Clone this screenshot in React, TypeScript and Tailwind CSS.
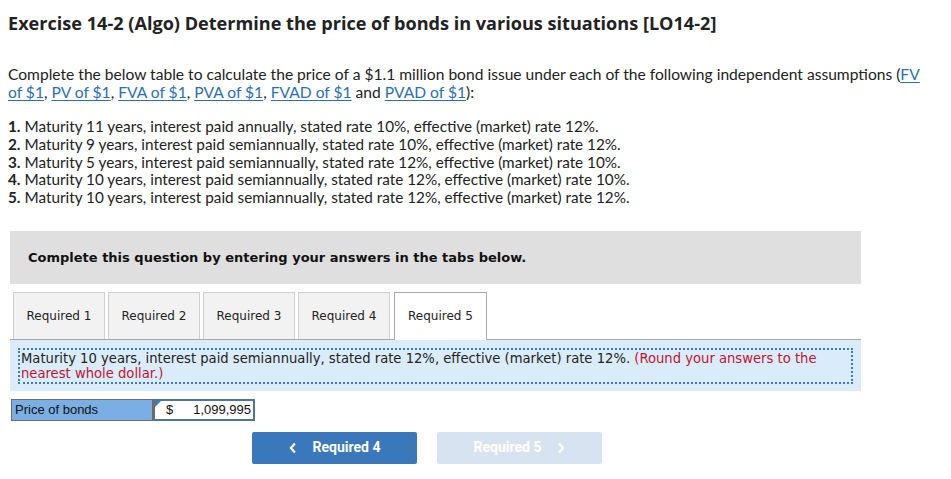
import React from "react";

const link = "text-[#2a6ebb] underline decoration-1 underline-offset-[1.5px]";

export default function App() {
  const items = [
    ["1.", "Maturity 11 years, interest paid annually, stated rate 10%, effective (market) rate 12%."],
    ["2.", "Maturity 9 years, interest paid semiannually, stated rate 10%, effective (market) rate 12%."],
    ["3.", "Maturity 5 years, interest paid semiannually, stated rate 12%, effective (market) rate 10%."],
    ["4.", "Maturity 10 years, interest paid semiannually, stated rate 12%, effective (market) rate 10%."],
    ["5.", "Maturity 10 years, interest paid semiannually, stated rate 12%, effective (market) rate 12%."],
  ];
  const verdana = { fontFamily: '"DejaVu Sans", Verdana, sans-serif' };
  return (
    <div className="w-[951px] h-[479px] bg-white text-[#222] overflow-hidden" style={{ fontFamily: 'Lato, "Liberation Sans", sans-serif' }}>
      <div className="pl-[8px] pr-[16px]">
        <h1 className="pt-[12px] text-[18.1px] leading-[22px] font-bold text-[#222]" style={{ fontFamily: '"Open Sans", Lato, sans-serif' }}>
          Exercise 14-2 (Algo) Determine the price of bonds in various situations [LO14-2]
        </h1>
        <p className="mt-[31px] text-[15.6px] leading-[18px] text-[#222]">
          Complete the below table to calculate the price of a $1.1 million bond issue under each of the following independent assumptions (<span className={link}>FV of $1</span>, <span className={link}>PV of $1</span>, <span className={link}>FVA of $1</span>, <span className={link}>PVA of $1</span>, <span className={link}>FVAD of $1</span> and <span className={link}>PVAD of $1</span>):
        </p>
        <div className="mt-[17px] text-[15.3px] leading-[17.8px]">
          {items.map(([n, t]) => (
            <div key={n}>
              <span className="font-bold">{n}</span> {t}
            </div>
          ))}
        </div>
      </div>

      <div className="ml-[10px] w-[851px]">
        <div className="mt-[24px] h-[53px] bg-[#dfdfdf] flex items-center pl-[18px]">
          <span className="text-[13px] font-bold text-[#111]" style={verdana}>
            Complete this question by entering your answers in the tabs below.
          </span>
        </div>

        <div className="mt-[8px] flex items-end gap-[3px] pl-[3px] h-[47px]" style={verdana}>
          {["Required 1", "Required 2", "Required 3", "Required 4"].map((t) => (
            <div key={t} className="w-[92px] h-[47px] bg-[#f2f2f2] border border-[#cfcfcf] border-b-0 flex items-center justify-center text-[12px] text-[#222]">
              {t}
            </div>
          ))}
          <div className="ml-[1px] w-[93px] h-[48px] bg-white border border-[#a8a8a8] border-b-0 flex items-center justify-center text-[12px] text-[#222] relative top-[1px]">
            Required 5
          </div>
        </div>

        <div className="bg-[#daecf9] border-t border-[#a8a8a8] h-[52px] pt-[8px] px-[8px]" style={verdana}>
          <div className="border-2 border-dotted border-[#3d7ac6] text-[13.17px] leading-[15px] text-[#222] px-[1px] pt-[1px] h-[36px]">
            Maturity 10 years, interest paid semiannually, stated rate 12%, effective (market) rate 12%.{" "}
            <span className="text-[#c0152f]">(Round your answers to the nearest whole dollar.)</span>
          </div>
        </div>

        <div className="mt-[8px] ml-[1px] flex text-[13px] leading-[19px]" style={{ fontFamily: '"Liberation Sans", Arial, sans-serif' }}>
          <div className="w-[142px] h-[22px] bg-[#7baee3] border border-[#6b6b6b] pl-[3px] text-[#111]">Price of bonds</div>
          <div className="relative w-[102px] h-[22px] bg-white border-2 border-[#54739a] border-l-[#6b6b6b] flex items-center text-[#111] pr-[2px]">
            <span className="absolute left-0 top-0 w-0 h-0 border-t-[6px] border-t-[#3d7ac6] border-r-[6px] border-r-transparent" />
            <span className="ml-[11px]">$</span>
            <span className="ml-auto">1,099,995</span>
          </div>
        </div>

        <div className="mt-[11px] ml-[242px] flex gap-[20px] text-[14px] font-bold" style={{ fontFamily: 'Roboto, "Liberation Sans", sans-serif' }}>
          <div className="w-[165px] h-[32px] rounded-[2px] bg-[#3a77bb] text-white flex items-center justify-center gap-[16px]">
            <svg width="8" height="12" viewBox="0 0 8 12"><path d="M6 1.5 L1.8 6 L6 10.5" stroke="white" strokeWidth="2.2" fill="none" /></svg>
            <span>Required 4</span>
          </div>
          <div className="w-[165px] h-[32px] rounded-[2px] bg-[#d8e3f1] text-white flex items-center justify-center gap-[16px]">
            <span>Required 5</span>
            <svg width="8" height="12" viewBox="0 0 8 12"><path d="M2 1.5 L6.2 6 L2 10.5" stroke="white" strokeWidth="2.2" fill="none" /></svg>
          </div>
        </div>
      </div>
    </div>
  );
}
